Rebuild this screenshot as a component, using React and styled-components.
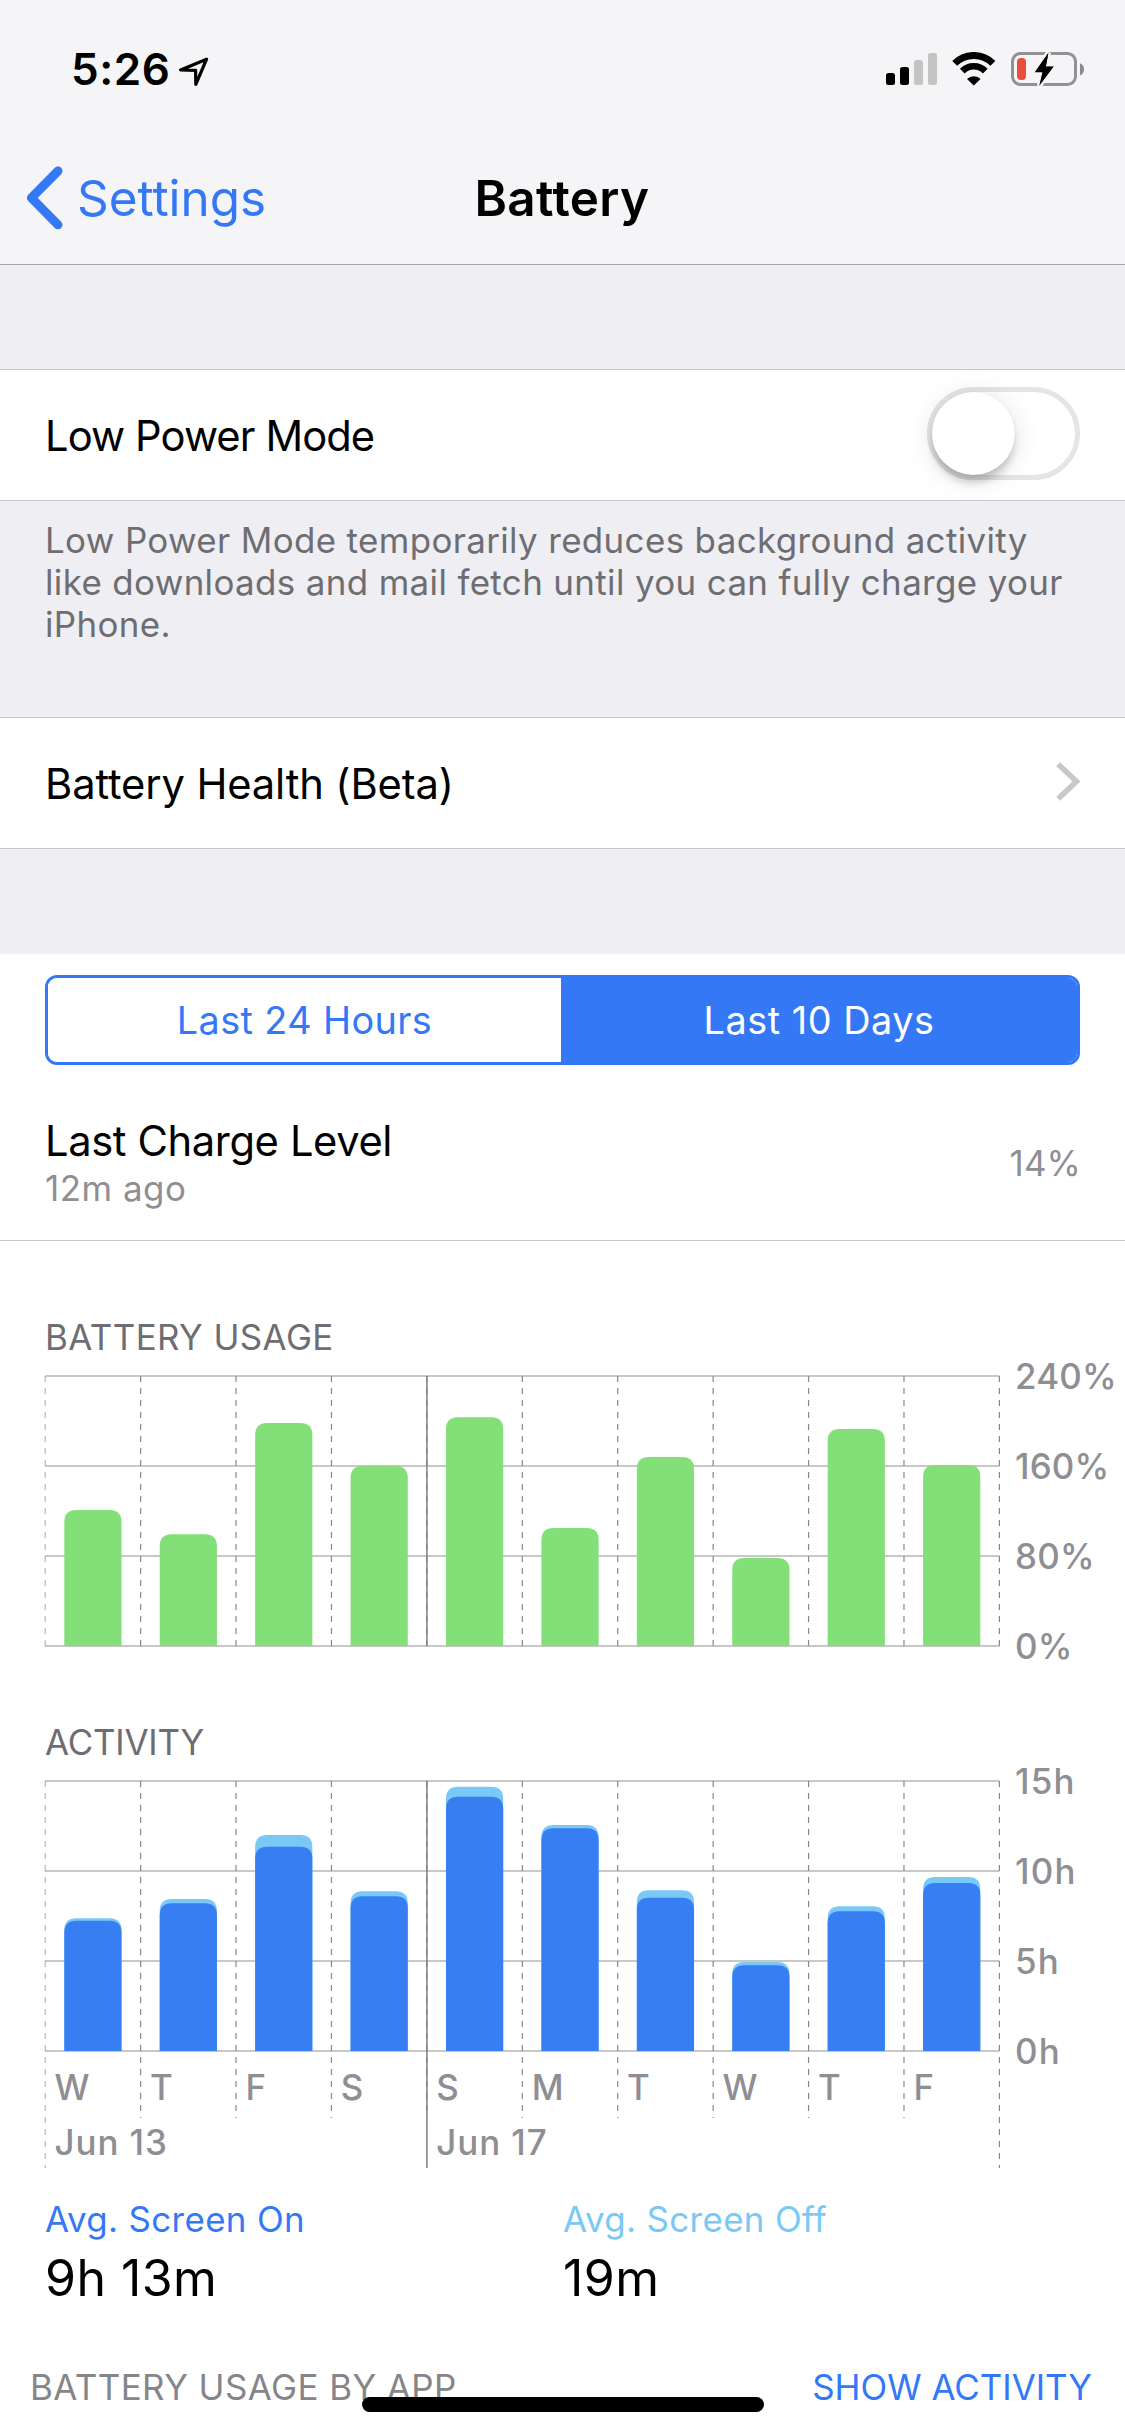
import styled, { createGlobalStyle } from 'styled-components'

const GlobalStyle = createGlobalStyle`
  * {
    box-sizing: border-box;
  }

  body {
    margin: 0;
    background: #EFEEF3;
    font-family: Inter, "Liberation Sans", sans-serif;
    color: #000000;
  }

  svg {
    display: block;
    flex: none;
  }
`

const Screen = styled.div`
  position: relative;
  width: 1125px;
  height: 2436px;
  overflow: hidden;
`

const Header = styled.header`
  height: 265px;
  background: #F5F5F7;
  border-bottom: 1px solid #A8A8AB;
`

const StatusBar = styled.div`
  display: flex;
  align-items: center;
  height: 138px;
  padding: 0 41px 0 71px;
`

const Time = styled.span`
  font-size: 44px;
  font-weight: 600;
  letter-spacing: 0.53px;
  margin-right: 8px;
`

const LocationIcon = styled.svg`
  margin-top: 6px;
`

const StatusIcons = styled.div`
  display: flex;
  align-items: center;
  margin-left: auto;
`

const WifiIcon = styled.svg`
  margin: 0 14px;
`

const NavBar = styled.nav`
  display: grid;
  grid-template-columns: 1fr auto 1fr;
  align-items: center;
  height: 126px;
  padding: 0 27px 6px 26px;
`

const BackButton = styled.a`
  display: flex;
  align-items: center;
  gap: 14px;
  color: #3478F6;
  font-size: 49.4px;
`

const Title = styled.h1`
  margin: 0;
  font-size: 49.4px;
  font-weight: 600;
  letter-spacing: 0.39px;
`

const Group = styled.section`
  margin-top: ${props => props.$top}px;
  background: #FFFFFF;
  border-top: 1px solid #C8C7CC;
  border-bottom: 1px solid #C8C7CC;
`

const Row = styled.div`
  display: flex;
  align-items: center;
  justify-content: space-between;
  height: 130px;
  padding: 0 45px;
`

const RowLabel = styled.span`
  padding-top: 2px;
  font-size: 41.7px;
  letter-spacing: ${props => props.$tracking}px;
`

const Toggle = styled.div`
  width: 153px;
  height: 93px;
  margin-bottom: 3px;
  border: 5px solid #E5E5E5;
  border-radius: 47px;
`

const Knob = styled.div`
  width: 83px;
  height: 83px;
  border-radius: 50%;
  background: #FFFFFF;
  box-shadow: 0 9px 8px -2px rgba(0, 0, 0, 0.2), 0 4px 28px rgba(0, 0, 0, 0.12), 0 0 2px rgba(0, 0, 0, 0.1);
`

const Disclosure = styled.svg`
  margin-bottom: 3px;
`

const Note = styled.p`
  height: 216px;
  margin: 0;
  padding: 18px 45px 0;
  color: #6D6D72;
  font-size: 34.9px;
  line-height: 42.2px;
  letter-spacing: 0.375px;
`

const Panel = styled.section`
  height: 1482px;
  margin-top: 105px;
  padding-top: 21px;
  background: #FFFFFF;
`

const Segmented = styled.div`
  display: grid;
  grid-template-columns: 513px 1fr;
  height: 90px;
  margin: 0 45px;
  border: 3px solid #3478F6;
  border-radius: 12px;
  overflow: hidden;
`

const Segment = styled.button`
  padding: 0;
  border: 0;
  background: ${props => props.$active ? '#3478F6' : '#FFFFFF'};
  color: ${props => props.$active ? '#FFFFFF' : '#3478F6'};
  font-family: inherit;
  font-size: 37.8px;
  letter-spacing: ${props => props.$active ? 0.54 : 0.38}px;
`

const ChargeRow = styled.div`
  display: flex;
  align-items: flex-start;
  justify-content: space-between;
  height: 176px;
  padding: 51px 44px 0 45px;
  border-bottom: 1px solid #C8C7CC;
`

const ChargeTitle = styled.div`
  font-size: 41.7px;
  line-height: 50px;
  letter-spacing: -0.38px;
`

const ChargeSmall = styled.div`
  margin-top: ${props => props.$top || 0}px;
  color: #8E8E93;
  font-size: 34.9px;
  line-height: 44px;
  letter-spacing: ${props => props.$tracking}px;
`

const ChartTitle = styled.h2`
  margin: ${props => props.$top}px 0 0 45px;
  color: #6D6D72;
  font-size: 34.9px;
  font-weight: 400;
  line-height: 41px;
  letter-spacing: ${props => props.$tracking}px;
`

const ChartCanvas = styled.svg`
  margin-top: -8px;
`

const ChartText = styled.text`
  fill: #8E8E93;
  font-size: 34.9px;
  font-weight: 500;
  letter-spacing: ${props => props.$tracking}px;
`

const Averages = styled.div`
  display: grid;
  grid-template-columns: 518px 1fr;
  margin: 29px 0 0 45px;
`

const AverageLabel = styled.div`
  color: ${props => props.$color};
  font-size: 34.9px;
  line-height: 44px;
  letter-spacing: 0.34px;
`

const AverageValue = styled.div`
  margin-top: 7px;
  font-size: 50px;
  line-height: 60px;
  letter-spacing: 0.45px;
`

const AppsHeader = styled.div`
  display: flex;
  justify-content: space-between;
  margin-top: 57px;
  padding: 0 33px 0 30px;
  font-size: 34.9px;
  line-height: 44px;
`

const AppsTitle = styled.span`
  color: #85858A;
  letter-spacing: 0.43px;
`

const AppsAction = styled.a`
  color: #3478F6;
`

const HomeIndicator = styled.div`
  position: absolute;
  left: 362px;
  bottom: 24px;
  width: 402px;
  height: 15px;
  border-radius: 8px;
  background: #000000;
`

const CHART_LEFT = 45.2
const CHART_TOP = 26
const CHART_HEIGHT = 270
const COLUMN = 95.42
const BAR_WIDTH = 57.2
const WEEK_START = 4

// bar heights, in pixels of the 270px plot
const usage = [136, 111.7, 223, 180, 228.7, 118, 189, 88, 217, 181]

const activity = [
  { total: 132.7, on: 130.3 },
  { total: 152, on: 147.7 },
  { total: 216, on: 204.3 },
  { total: 159.7, on: 154.7 },
  { total: 264.3, on: 254.3 },
  { total: 226, on: 222.7 },
  { total: 160.7, on: 153.3 },
  { total: 89, on: 85.7 },
  { total: 144.7, on: 139.7 },
  { total: 174, on: 168 },
]

const days = ['W', 'T', 'F', 'S', 'S', 'M', 'T', 'W', 'T', 'F']

const barPath = (index, height) => {
  const x = CHART_LEFT + COLUMN * index + (COLUMN - BAR_WIDTH) / 2
  const bottom = CHART_TOP + CHART_HEIGHT
  const top = bottom - height
  const r = 12
  return `M${x} ${bottom}V${top + r}Q${x} ${top} ${x + r} ${top}H${x + BAR_WIDTH - r}Q${x + BAR_WIDTH} ${top} ${x + BAR_WIDTH} ${top + r}V${bottom}Z`
}

const Chart = ({ height, scale, tracking, dayEnd, weekEnd, children }) => {
  const right = CHART_LEFT + COLUMN * 10
  return (
    <ChartCanvas width="1125" height={height}>
      {scale.map((label, i) => (
        <g key={label}>
          <line x1="45" x2={right} y1={CHART_TOP + i * 90} y2={CHART_TOP + i * 90} stroke="#C8C8C8" strokeWidth="2" />
          <ChartText x="1015" y={CHART_TOP + i * 90 + 12.5} $tracking={tracking}>{label}</ChartText>
        </g>
      ))}
      {Array.from({ length: 11 }, (_, i) => (
        <line
          key={i}
          x1={CHART_LEFT + COLUMN * i}
          x2={CHART_LEFT + COLUMN * i}
          y1={CHART_TOP}
          y2={i === 0 || i === 10 ? weekEnd : dayEnd}
          stroke="#88888C"
          strokeOpacity={i === 0 ? 0.6 : 1}
          strokeWidth="1.2"
          strokeDasharray="6 6"
        />
      ))}
      <line
        x1={CHART_LEFT + COLUMN * WEEK_START}
        x2={CHART_LEFT + COLUMN * WEEK_START}
        y1={CHART_TOP}
        y2={weekEnd}
        stroke="#7F8082"
        strokeWidth="1.5"
      />
      {children}
    </ChartCanvas>
  )
}

const App = () => {
  return (
    <Screen>
      <GlobalStyle />
      <Header>
        <StatusBar>
          <Time>5:26</Time>
          <LocationIcon width="31" height="30" viewBox="0 0 31 30">
            <path d="M28.6 2.2L2.6 12.9L17.6 13.3L17.8 27.3Z" fill="none" stroke="#000" strokeWidth="3.2" strokeLinejoin="round" />
          </LocationIcon>
          <StatusIcons>
            <svg width="51" height="34" viewBox="0 0 51 34">
              <rect x="0" y="21" width="9" height="12" rx="2.5" />
              <rect x="14" y="15" width="9" height="18" rx="2.5" />
              <rect x="28" y="8" width="9" height="25" rx="2.5" fill="#C4C4C4" />
              <rect x="42" y="1" width="9" height="32" rx="2.5" fill="#C4C4C4" />
            </svg>
            <WifiIcon width="46" height="34" viewBox="0 0 46 34">
              <g fill="none" stroke="#000">
                <path d="M3.7 11.4A27 27 0 0 1 41.9 11.4" strokeWidth="7" />
                <path d="M11.3 19.1A16.2 16.2 0 0 1 34.3 19.1" strokeWidth="6.6" />
              </g>
              <path d="M16 27A9.8 9.8 0 0 1 29.6 27L22.8 33.4Z" />
            </WifiIcon>
            <svg width="73" height="34" viewBox="0 0 73 34">
              <rect x="1.5" y="1.5" width="63" height="31" rx="8" fill="none" stroke="#929294" strokeWidth="3" />
              <path d="M69 11.2Q73 12.6 73 17.2T69 23.4Z" fill="#8B8B8D" />
              <rect x="6" y="6" width="9" height="22" rx="4" fill="#EB4E3D" />
              <path d="M37.5 0.5L23.8 20.2H31.6L28.3 33.8L42.6 14.5H34.8Z" fill="#000" stroke="#F5F5F7" strokeWidth="5" paintOrder="stroke" />
              <path d="M37.2 1.5L24.3 19.7H31.8L28.6 33L42.3 14.8H34.8Z" />
            </svg>
          </StatusIcons>
        </StatusBar>
        <NavBar>
          <BackButton>
            <svg width="37" height="64" viewBox="0 0 37 64">
              <path d="M32 5L5.4 31.8L32 58.8" fill="none" stroke="#3478F6" strokeWidth="9" strokeLinecap="round" strokeLinejoin="round" />
            </svg>
            Settings
          </BackButton>
          <Title>Battery</Title>
        </NavBar>
      </Header>

      <Group $top={104}>
        <Row>
          <RowLabel $tracking={-0.9}>Low Power Mode</RowLabel>
          <Toggle>
            <Knob />
          </Toggle>
        </Row>
      </Group>
      <Note>
        Low Power Mode temporarily reduces background activity like downloads and mail fetch until you can fully charge your iPhone.
      </Note>

      <Group $top={0}>
        <Row>
          <RowLabel $tracking={-0.12}>Battery Health (Beta)</RowLabel>
          <Disclosure width="24" height="39" viewBox="0 0 24 39">
            <path d="M2.2 2.2L20.5 19.5L2.2 36.8" fill="none" stroke="#C7C7CC" strokeWidth="5.5" />
          </Disclosure>
        </Row>
      </Group>

      <Panel>
        <Segmented>
          <Segment>Last 24 Hours</Segment>
          <Segment $active>Last 10 Days</Segment>
        </Segmented>

        <ChargeRow>
          <div>
            <ChargeTitle>Last Charge Level</ChargeTitle>
            <ChargeSmall $tracking={0.53}>12m ago</ChargeSmall>
          </div>
          <ChargeSmall $top={25} $tracking={0.13}>14%</ChargeSmall>
        </ChargeRow>

        <ChartTitle $top={76} $tracking={0.42}>BATTERY USAGE</ChartTitle>
        <Chart height={318} scale={['240%', '160%', '80%', '0%']} tracking={0.2} dayEnd={296} weekEnd={296}>
          {usage.map((value, i) => (
            <path key={i} d={barPath(i, value)} fill="#83DF78" />
          ))}
        </Chart>

        <ChartTitle $top={54} $tracking={-0.2}>ACTIVITY</ChartTitle>
        <Chart height={413} scale={['15h', '10h', '5h', '0h']} tracking={1.2} dayEnd={363} weekEnd={413}>
          {activity.map((day, i) => (
            <g key={i}>
              <path d={barPath(i, day.total)} fill="#79C8F5" />
              <path d={barPath(i, day.on)} fill="#377EF2" />
              <ChartText x={CHART_LEFT + COLUMN * i + 9.4} y="345">{days[i]}</ChartText>
            </g>
          ))}
          <ChartText x="54.5" y="400" $tracking={0.93}>Jun 13</ChartText>
          <ChartText x="436.3" y="400" $tracking={0.93}>Jun 17</ChartText>
        </Chart>

        <Averages>
          <div>
            <AverageLabel $color="#3478F6">Avg. Screen On</AverageLabel>
            <AverageValue>9h 13m</AverageValue>
          </div>
          <div>
            <AverageLabel $color="#79C8F5">Avg. Screen Off</AverageLabel>
            <AverageValue>19m</AverageValue>
          </div>
        </Averages>

        <AppsHeader>
          <AppsTitle>BATTERY USAGE BY APP</AppsTitle>
          <AppsAction>SHOW ACTIVITY</AppsAction>
        </AppsHeader>
      </Panel>
      <HomeIndicator />
    </Screen>
  )
}

export default App
